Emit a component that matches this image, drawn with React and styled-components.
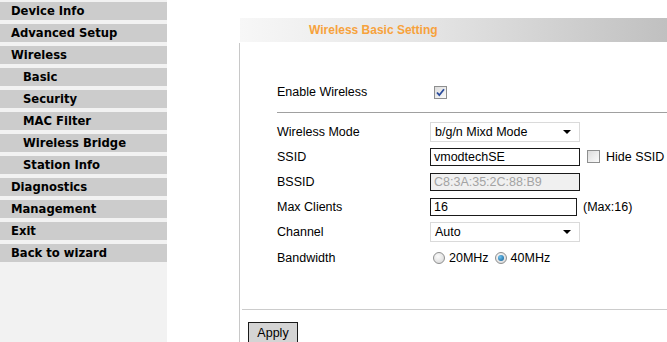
import React from 'react';
import styled, { createGlobalStyle } from 'styled-components';

const GlobalStyle = createGlobalStyle`
  html, body {
    margin: 0;
    padding: 0;
    background: #ffffff;
    overflow: hidden;
  }
`;

const Page = styled.div`
  display: flex;
  width: 667px;
  height: 342px;
  overflow: hidden;
`;

const Sidebar = styled.nav`
  width: 167px;
  flex-shrink: 0;
  background: #f2f2f2;
  padding-top: 2px;
  display: flex;
  flex-direction: column;
  gap: 4px;
`;

const MenuItem = styled.div`
  height: 18px;
  line-height: 19px;
  background: #cccccc;
  padding-left: ${(p) => (p.$sub ? 23 : 11)}px;
  font-family: 'DejaVu Sans', Verdana, sans-serif;
  font-weight: bold;
  font-size: 11.6px;
  color: #000;
  white-space: nowrap;
`;

const Main = styled.main`
  flex: 1;
  padding: 18px 0 0 72px;
  display: flex;
  flex-direction: column;
`;

const HeaderBar = styled.div`
  height: 24px;
  margin-left: 1px;
  background: linear-gradient(to right, #f7f7f7 0%, #e4e4e4 45%, #c0c0c0 100%);
  padding-left: 69px;
  font-family: 'Liberation Sans', Arial, sans-serif;
  font-weight: bold;
  font-size: 12px;
  line-height: 24px;
  color: #f7a23c;
`;

const Panel = styled.section`
  flex: 1;
  margin-top: 1px;
  border-left: 1px solid #c8c8c8;
  display: flex;
  flex-direction: column;
  font-family: 'Liberation Sans', Arial, sans-serif;
  font-size: 12.5px;
  color: #000;
`;

const Form = styled.div`
  padding: 42px 0 0 37px;
  height: 266px;
  box-sizing: border-box;
  flex-shrink: 0;
`;

const Row = styled.div`
  display: flex;
  align-items: center;
  height: ${(p) => p.$h || 25}px;
`;

const Label = styled.div`
  width: 153px;
  flex-shrink: 0;
`;

const Divider = styled.hr`
  border: none;
  border-top: 1px solid #a0a0a0;
  margin: ${(p) => p.$m || '0'};
`;

const Box = styled.div`
  width: 13px;
  height: 13px;
  box-sizing: border-box;
  border: 1px solid #8e8f8f;
  background: linear-gradient(135deg, #dcdcdc, #fbfbfb);
  display: flex;
  align-items: center;
  justify-content: center;
  margin: ${(p) => p.$m || '0'};
  flex-shrink: 0;
`;

const Select = styled.div`
  width: 150px;
  height: 20px;
  box-sizing: border-box;
  border: 1px solid #dadada;
  background: #fff;
  display: flex;
  align-items: center;
  justify-content: space-between;
  padding: 0 8px 0 4px;
`;

const Arrow = styled.span`
  width: 0;
  height: 0;
  border-left: 4px solid transparent;
  border-right: 4px solid transparent;
  border-top: 4px solid #000;
`;

const TextBox = styled.div`
  width: ${(p) => p.$w || 150}px;
  height: 18px;
  box-sizing: border-box;
  border: 1px solid #1a1a1a;
  background: ${(p) => (p.$disabled ? '#f0f0f0' : '#fff')};
  color: ${(p) => (p.$disabled ? '#a3a3a3' : '#000')};
  padding-left: 3px;
  line-height: 16px;
`;

const Note = styled.span`
  margin-left: ${(p) => p.$ml || 0}px;
`;

const Radio = styled.span`
  width: 12px;
  height: 12px;
  box-sizing: border-box;
  border-radius: 50%;
  border: 1px solid #8e8f8f;
  background: radial-gradient(circle at 40% 35%, #fbfbfb, #d4d4d4);
  display: inline-flex;
  align-items: center;
  justify-content: center;
  margin: 0 4px 0 ${(p) => p.$ml || 0}px;
  &::after {
    content: '';
    display: ${(p) => (p.$on ? 'block' : 'none')};
    width: 6px;
    height: 6px;
    border-radius: 50%;
    background: radial-gradient(circle at 35% 35%, #6fc3f0, #0e5b93);
  }
`;

const Footer = styled.div`
  border-top: 1px solid #cccccc;
  margin-left: 2px;
  padding: 12px 0 0 6px;
`;

const Button = styled.button`
  width: 50px;
  height: 21px;
  box-sizing: border-box;
  border: 1px solid #1a1a1a;
  background: #d4d4d4;
  font-family: 'Liberation Sans', Arial, sans-serif;
  font-size: 12.5px;
  color: #000;
  padding: 0;
`;

const menu = [
  ['Device Info'],
  ['Advanced Setup'],
  ['Wireless'],
  ['Basic', true],
  ['Security', true],
  ['MAC Filter', true],
  ['Wireless Bridge', true],
  ['Station Info', true],
  ['Diagnostics'],
  ['Management'],
  ['Exit'],
  ['Back to wizard'],
];

const Check = () => (
  <svg width="9" height="9" viewBox="0 0 9 9">
    <path d="M1 4.5 L3.3 7.2 L8 1.2" fill="none" stroke="#2b4c9c" strokeWidth="1.8" />
  </svg>
);

export default function App() {
  return (
    <Page>
      <GlobalStyle />
      <Sidebar>
        {menu.map(([name, sub]) => (
          <MenuItem key={name} $sub={sub}>{name}</MenuItem>
        ))}
      </Sidebar>
      <Main>
        <HeaderBar>Wireless Basic Setting</HeaderBar>
        <Panel>
          <Form>
            <Row $h={14}>
              <Label>Enable Wireless</Label>
              <Box $m="0 0 0 4px"><Check /></Box>
            </Row>
            <Divider $m="13px 0 6px 0" />
            <Row>
              <Label>Wireless Mode</Label>
              <Select>b/g/n Mixd Mode<Arrow /></Select>
            </Row>
            <Row>
              <Label>SSID</Label>
              <TextBox>vmodtechSE</TextBox>
              <Box $m="0 6px 0 7px" />
              Hide SSID
            </Row>
            <Row>
              <Label>BSSID</Label>
              <TextBox $disabled>C8:3A:35:2C:88:B9</TextBox>
            </Row>
            <Row>
              <Label>Max Clients</Label>
              <TextBox $w={147}>16</TextBox>
              <Note $ml={6}>(Max:16)</Note>
            </Row>
            <Row>
              <Label>Channel</Label>
              <Select>Auto<Arrow /></Select>
            </Row>
            <Row $h={27}>
              <Label>Bandwidth</Label>
              <Radio $ml={3} />20MHz
              <Radio $ml={6} $on />40MHz
            </Row>
          </Form>
          <Footer>
            <Button>Apply</Button>
          </Footer>
        </Panel>
      </Main>
    </Page>
  );
}
